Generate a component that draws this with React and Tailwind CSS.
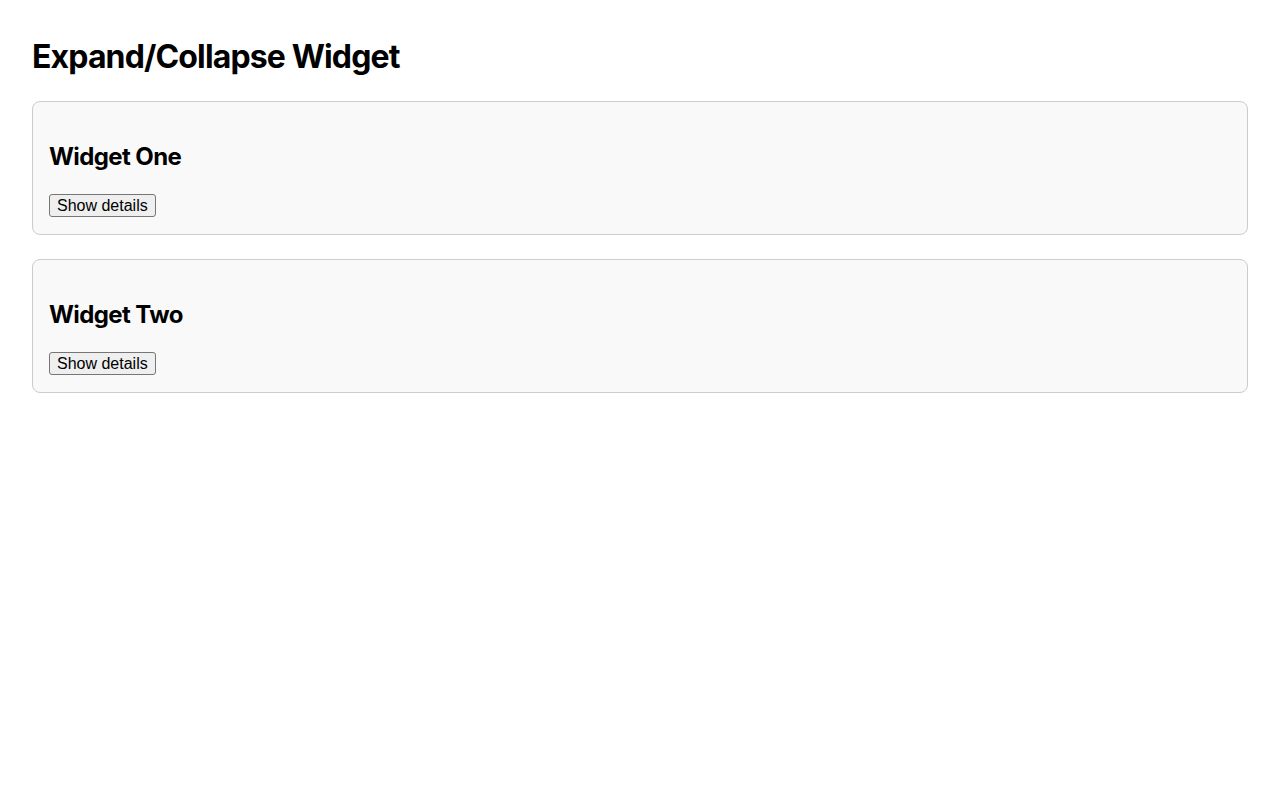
import { useState } from 'react';

const widgets = [
  { id: 1, title: 'Widget One', details: 'Details for widget one.' },
  { id: 2, title: 'Widget Two', details: 'Details for widget two.' },
];

function Widget({ title, details }) {
  const [open, setOpen] = useState(false);

  return (
    <div className="mb-6 rounded-lg border border-[#ccc] bg-[#f9f9f9] p-4">
      <h2 className="mt-[21px] mb-[19px] text-2xl font-bold leading-[1.5] tracking-[-0.025em]">{title}</h2>
      <div className="leading-[1.5]">
        <button
          onClick={() => setOpen(!open)}
          className="rounded-[3px] border border-[#767676] bg-[#efefef] px-[7px] py-px align-top font-['Liberation_Sans',Arial,sans-serif] text-base leading-[19px] text-black"
        >
          {open ? 'Hide details' : 'Show details'}
        </button>
      </div>
      {open && <p className="mt-4">{details}</p>}
    </div>
  );
}

export default function App() {
  return (
    <div className="min-h-screen bg-white px-8 pt-[33px] pb-8 font-['Inter',sans-serif] text-black">
      <h1 className="mb-[20px] text-[32px] font-bold leading-[1.5] tracking-[-0.027em]">
        Expand/Collapse Widget
      </h1>
      {widgets.map((w) => (
        <Widget key={w.id} title={w.title} details={w.details} />
      ))}
    </div>
  );
}
